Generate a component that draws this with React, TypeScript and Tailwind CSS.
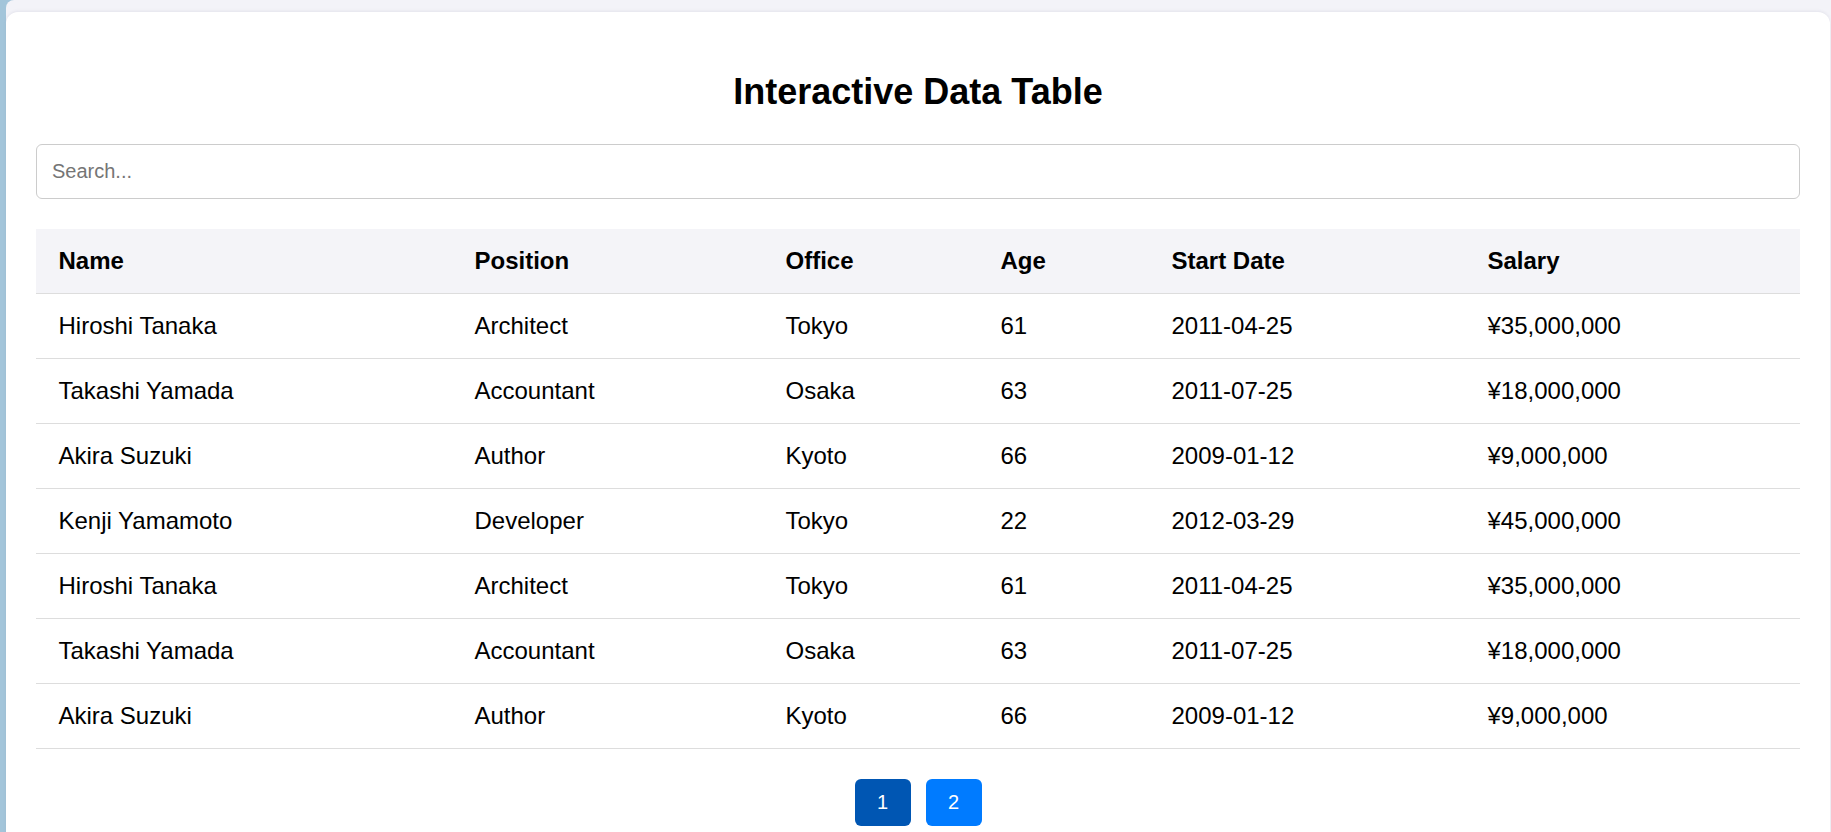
import { useState } from "react";

type Row = {
  name: string;
  position: string;
  office: string;
  age: number;
  startDate: string;
  salary: string;
};

const rows: Row[] = [
  { name: "Hiroshi Tanaka", position: "Architect", office: "Tokyo", age: 61, startDate: "2011-04-25", salary: "¥35,000,000" },
  { name: "Takashi Yamada", position: "Accountant", office: "Osaka", age: 63, startDate: "2011-07-25", salary: "¥18,000,000" },
  { name: "Akira Suzuki", position: "Author", office: "Kyoto", age: 66, startDate: "2009-01-12", salary: "¥9,000,000" },
  { name: "Kenji Yamamoto", position: "Developer", office: "Tokyo", age: 22, startDate: "2012-03-29", salary: "¥45,000,000" },
  { name: "Hiroshi Tanaka", position: "Architect", office: "Tokyo", age: 61, startDate: "2011-04-25", salary: "¥35,000,000" },
  { name: "Takashi Yamada", position: "Accountant", office: "Osaka", age: 63, startDate: "2011-07-25", salary: "¥18,000,000" },
  { name: "Akira Suzuki", position: "Author", office: "Kyoto", age: 66, startDate: "2009-01-12", salary: "¥9,000,000" },
];

const headers = ["Name", "Position", "Office", "Age", "Start Date", "Salary"];

const App = () => {
  const [query, setQuery] = useState("");
  const [page, setPage] = useState(1);

  const filtered = rows.filter((r) =>
    Object.values(r).join(" ").toLowerCase().includes(query.toLowerCase())
  );

  return (
    <div className="min-h-screen bg-[#a3c5da] font-['Liberation_Sans',Arial,sans-serif] text-black">
      <div className="ml-[6px] min-h-screen rounded-tl-[8px] bg-[#f3f3f8] pt-[12px] pr-px">
        {/* Card */}
        <div className="min-h-[820px] rounded-[12px] bg-white px-[30px] pt-[30px] pb-[30px] shadow-[0_-1px_3px_rgba(120,120,160,0.12)]">
          <h1 className="mt-[29px] mb-[32px] text-center text-[36px] leading-[41px] font-bold">
            Interactive Data Table
          </h1>

          <input
            type="text"
            value={query}
            onChange={(e) => setQuery(e.target.value)}
            placeholder="Search..."
            className="mb-[30px] block h-[55px] w-full rounded-[6px] border border-[#cccccc] px-[15px] text-[20px] leading-[23px] outline-none placeholder:text-[#757575]"
          />

          <table className="w-full table-fixed border-collapse text-left text-[24px] leading-[28px]">
            <colgroup>
              <col className="w-[416px]" />
              <col className="w-[311px]" />
              <col className="w-[215px]" />
              <col className="w-[171px]" />
              <col className="w-[316px]" />
              <col className="w-[335px]" />
            </colgroup>
            <thead>
              <tr className="bg-[#f4f4f8]">
                {headers.map((h) => (
                  <th key={h} className="border-b border-[#dddddd] px-[22.5px] py-[18px] font-bold">
                    {h}
                  </th>
                ))}
              </tr>
            </thead>
            <tbody>
              {filtered.map((r, i) => (
                <tr key={i}>
                  <td className="border-b border-[#dddddd] px-[22.5px] py-[18px]">{r.name}</td>
                  <td className="border-b border-[#dddddd] px-[22.5px] py-[18px]">{r.position}</td>
                  <td className="border-b border-[#dddddd] px-[22.5px] py-[18px]">{r.office}</td>
                  <td className="border-b border-[#dddddd] px-[22.5px] py-[18px]">{r.age}</td>
                  <td className="border-b border-[#dddddd] px-[22.5px] py-[18px]">{r.startDate}</td>
                  <td className="border-b border-[#dddddd] px-[22.5px] py-[18px]">{r.salary}</td>
                </tr>
              ))}
            </tbody>
          </table>

          {/* Pagination */}
          <div className="mt-[30px] flex justify-center gap-[15px]">
            {[1, 2].map((n) => (
              <button
                key={n}
                onClick={() => setPage(n)}
                className={
                  page === n
                    ? "w-[56px] rounded-[6px] bg-[#0056b3] py-[12px] text-[20px] leading-[23px] text-white"
                    : "w-[56px] rounded-[6px] bg-[#007bff] py-[12px] text-[20px] leading-[23px] text-white"
                }
              >
                {n}
              </button>
            ))}
          </div>
        </div>
      </div>
    </div>
  );
};

export default App;
